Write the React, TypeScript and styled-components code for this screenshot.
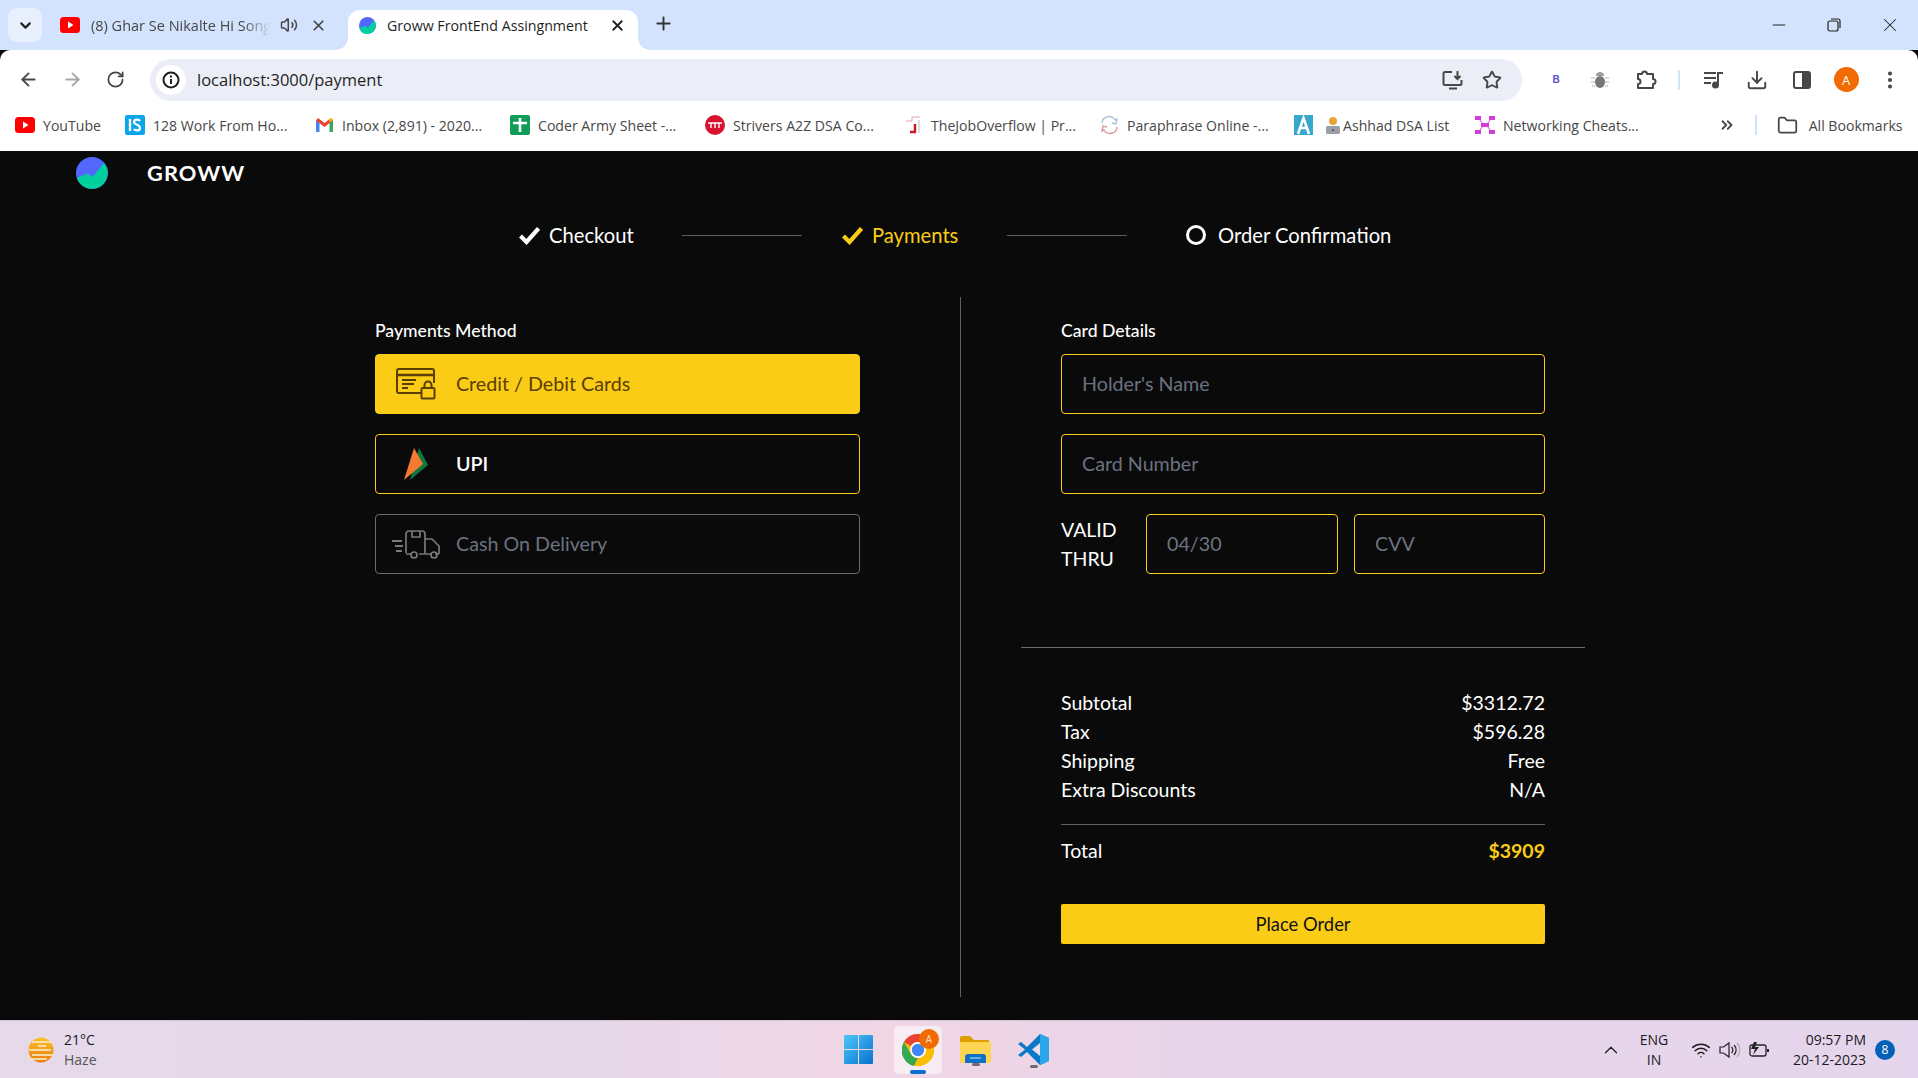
import React from "react";
import styled, { createGlobalStyle } from "styled-components";
import {
  ChevronDown, X, Plus, ArrowLeft, ArrowRight, RotateCw, Star, Download,
  EllipsisVertical, ChevronsRight, Folder, Wifi, ChevronUp, Minus, Volume2,
} from "lucide-react";

const Global = createGlobalStyle`
  html, body { margin: 0; padding: 0; background: #0a0a0a; }
  * { box-sizing: border-box; }
  #root { width: 1918px; height: 1078px; overflow: hidden; }
`;

const Shell = styled.div`
  width: 1918px; height: 1078px; display: flex; flex-direction: column;
  font-family: "Open Sans", "Noto Sans", sans-serif; overflow: hidden;
`;

/* ---------- browser chrome ---------- */
const TabStrip = styled.div`
  height: 50px; background: #d3e3fd; display: flex; align-items: flex-end; flex: none;
  padding-left: 8px; position: relative;
`;
const TabSearch = styled.div`
  width: 34px; height: 34px; margin-bottom: 8px; border-radius: 9px; background: #e9f0fd;
  display: flex; align-items: center; justify-content: center; color: #1f1f1f;
`;
const InactiveTab = styled.div`
  width: 306px; height: 42px; display: flex; align-items: center; padding: 0 0 8px 18px;
  font-size: 14.5px; color: #474747;
`;
const ActiveTab = styled.div`
  width: 290px; height: 40px; background: #fff; border-radius: 12px 12px 0 0;
  display: flex; align-items: center; padding: 0 0 10px 11px; font-size: 14.2px; color: #1f1f1f;
  position: relative;
  &::before, &::after { content: ""; position: absolute; bottom: 0; width: 12px; height: 12px; background: radial-gradient(circle at var(--c) 0, #d3e3fd 11.5px, #fff 12px); }
  &::before { left: -12px; --c: 0; }
  &::after { right: -12px; --c: 100%; }
`;
const TabTitle = styled.span<{ $w: number; $fade?: boolean }>`
  width: ${(p) => p.$w}px; margin-left: 11px; flex: none; white-space: nowrap; overflow: hidden;
  ${(p) => p.$fade && "-webkit-mask-image: linear-gradient(90deg,#000 85%,transparent 100%);"}
`;
const SpeakerSlot = styled.div`margin-left: 10px; display: flex;`;
const CloseSlot = styled.div`margin-left: 12px; display: flex;`;
const NewTab = styled.div`
  margin: 0 0 12px 15px; color: #333; display: flex; height: 30px; align-items: center;
`;
const WindowControls = styled.div`
  margin-left: auto; display: flex; align-items: center; gap: 36px; height: 50px; padding: 0 17px 0 0; color: #222;
  align-self: flex-start;
`;
const Restore = styled.svg`width: 14px; height: 14px; margin: 0 2px;`;

const Toolbar = styled.div`
  height: 55px; background: #fff; border-radius: 10px 10px 0 0; display: flex; align-items: center; flex: none;
  padding: 4px 0 0 18px; color: #474747;
`;
const NavIcons = styled.div`display: flex; gap: 23px; align-items: center; width: 132px; flex: none;`;
const Omnibox = styled.div`
  width: 1372px; height: 42px; border-radius: 21px; background: #ebeef7; display: flex; align-items: center; flex: none;
  padding: 0 20px 0 6px; font-size: 16.5px; color: #1f1f1f;
`;
const InfoBubble = styled.div`
  width: 30px; height: 30px; border-radius: 50%; background: #fff; display: flex; align-items: center; justify-content: center;
  margin-right: 11px;
`;
const InfoGlyph = styled.svg`width: 18px; height: 18px;`;
const OmniRight = styled.div`margin-left: auto; display: flex; align-items: center; gap: 18px; color: #474747;`;
const Ext = styled.div<{ $w: number }>`
  width: ${(p) => p.$w}px; display: flex; justify-content: center; align-items: center; flex: none;
`;
const BadgeB = styled.span`font-size: 10px; font-weight: 700; color: #5552cf; font-family: "Liberation Sans", sans-serif;`;
const ToolSep = styled.div`width: 2px; height: 20px; background: #d3e3fd; margin-left: -4px; flex: none;`;
const Avatar = styled.div`
  width: 25px; height: 25px; border-radius: 50%; background: #f16a02; color: #fff; font-size: 13px; flex: none;
  display: flex; align-items: center; justify-content: center;
`;

const Bookmarks = styled.div`
  height: 46px; background: #fff; display: flex; align-items: center; flex: none; padding: 0 0 6px 15px;
  font-size: 14.1px; color: #474747;
`;
const Bookmark = styled.div<{ $w: number }>`
  width: ${(p) => p.$w}px; display: flex; align-items: center; gap: 8px; white-space: nowrap; flex: none;
`;
const EmojiSlot = styled.span`display: flex; margin: 0 -6px 0 4px;`;
const BookmarkEnd = styled.div`margin-left: 7px; display: flex; align-items: center; color: #474747;`;
const BookSep = styled.div`width: 2px; height: 20px; background: #d3e3fd; margin: 0 20px 0 19px;`;

/* ---------- page ---------- */
const Page = styled.div`
  flex: 1; background: #0a0a0a; color: #fff; font-family: Lato, "Noto Sans", sans-serif; display: flex; flex-direction: column;
`;
const Brand = styled.div`
  display: flex; align-items: center; height: 38px; padding: 5px 0 0 76px; flex: none;
`;
const BrandName = styled.div`
  margin-left: 39px; font-size: 21.8px; font-weight: 700; letter-spacing: 1.1px;
`;
const Stepper = styled.div`
  display: flex; align-items: center; height: 84px; padding: 8px 0 0 519px; flex: none;
`;
const Step = styled.div<{ $w: number; $ml?: number; $active?: boolean }>`
  width: ${(p) => p.$w}px; margin-left: ${(p) => p.$ml ?? 0}px; display: flex; align-items: center; flex: none;
  font-size: 20.2px; color: ${(p) => (p.$active ? "#facc15" : "#fff")};
`;
const StepText = styled.span<{ $ml: number }>`margin-left: ${(p) => p.$ml}px;`;
const Connector = styled.div`width: 120px; height: 1px; background: #5f5f5f; flex: none; margin-top: 0;`;
const Ring = styled.div`width: 20px; height: 20px; border-radius: 50%; border: 3px solid #fff;`;

const Main = styled.div`
  display: flex; padding-left: 375px; height: 700px; margin-top: 24px; flex: none;
`;
const LeftCol = styled.div`width: 485px; flex: none; display: flex; flex-direction: column;`;
const SectionTitle = styled.div`
  font-size: 17.6px; font-weight: 500; line-height: 24px; margin: 22px 0 11px;
`;
const MethodList = styled.div`display: flex; flex-direction: column; gap: 20px;`;
const Method = styled.div<{ $kind: "active" | "open" | "off" }>`
  height: 60px; border-radius: 4px; display: flex; align-items: center; font-size: 19.7px;
  border: 1px solid ${(p) => (p.$kind === "off" ? "#6b6b6b" : "#facc15")};
  background: ${(p) => (p.$kind === "active" ? "#facc15" : "transparent")};
  color: ${(p) => (p.$kind === "active" ? "#5b3d05" : p.$kind === "off" ? "#6b7280" : "#fff")};
  font-weight: ${(p) => (p.$kind === "open" ? 600 : 400)};
  padding-bottom: 1px;
`;
const MethodIcon = styled.div`width: 80px; display: flex; justify-content: center; flex: none;`;
const Divider = styled.div`width: 1px; background: #5f5f5f; margin-left: 100px; flex: none;`;
const RightCol = styled.div`
  width: 564px; margin-left: 60px; flex: none; display: flex; flex-direction: column;
`;
const Pad = styled.div`padding: 0 40px; display: flex; flex-direction: column;`;
const FieldStack = styled.div`display: flex; flex-direction: column; gap: 20px;`;
const Field = styled.input`
  width: 100%; height: 60px; border: 1px solid #facc15; border-radius: 4px; background: transparent; color: #fff;
  font: 400 19.7px Lato, sans-serif; padding: 0 20px 1px; outline: none; min-width: 0;
  &::placeholder { color: #6b7280; opacity: 1; }
`;
const ValidRow = styled.div`display: grid; grid-template-columns: 69px 192px 191px; column-gap: 16px;`;
const ValidLabel = styled.div`font-size: 19.5px; line-height: 29px; padding-top: 1px;`;
const Rule = styled.div`height: 1px; background: #6b6b6b; margin-top: 73px;`;
const Rows = styled.div`display: flex; flex-direction: column; margin-top: 40px;`;
const Row = styled.div`
  display: flex; justify-content: space-between; font-size: 19.5px; line-height: 29px;
`;
const InnerRule = styled.div`height: 1px; background: #5f5f5f; margin: 20px 0 11px;`;
const TotalValue = styled.span`color: #facc15; font-weight: 700;`;
const Cta = styled.button`
  height: 40px; margin-top: 39px; width: 100%; border: 0; border-radius: 2px; background: #facc15; color: #111;
  font: 400 18.4px Lato, sans-serif;
`;

/* ---------- taskbar ---------- */
const Taskbar = styled.div`
  height: 58px; flex: none; border-top: 1px solid #cfc4d6; display: flex; align-items: center; position: relative;
  background: linear-gradient(90deg, #e6d9ea 0%, #e6d8e9 30%, #f1d6e5 46%, #e8d4e9 62%, #e5d5ec 100%);
  font-family: "Open Sans", sans-serif; color: #1c1c1c; padding-left: 26px;
`;
const Weather = styled.div`width: 818px; display: flex; align-items: center; gap: 10px; flex: none;`;
const WeatherText = styled.div`font-size: 14px; line-height: 20px; color: #1c1c1c;`;
const Muted = styled.div`color: #555;`;
const Tray = styled.div`display: flex; align-items: center;`;
const TrayTile = styled.div`
  width: 48px; height: 48px; margin: 0 10px 0 21px; border-radius: 5px; background: rgba(255,255,255,.55); display: flex; align-items: center; justify-content: center;
  position: relative;
`;
const Pip = styled.div<{ $blue?: boolean }>`
  position: absolute; left: 50%; bottom: ${(p) => (p.$blue ? "0" : "-3px")}; transform: translateX(-50%);
  width: ${(p) => (p.$blue ? 16 : 8)}px; height: 3.5px; border-radius: 2px; background: ${(p) => (p.$blue ? "#0a6fd1" : "#6b6b70")};
`;
const AppSlot = styled.div<{ $ml: number }>`margin-left: ${(p) => p.$ml}px; position: relative; display: flex;`;
const TileBadge = styled.div`
  position: absolute; top: 3px; right: 3px; width: 20px; height: 20px; border-radius: 50%; background: #f16a02;
  color: #fde2c8; font-size: 10px; display: flex; align-items: center; justify-content: center;
`;
const SysTray = styled.div`margin-left: auto; display: flex; align-items: center; padding-right: 23px;`;
const Lang = styled.div`font-size: 14px; line-height: 20px; text-align: center; margin: 0 0 0 11px; width: 42px;`;
const Clock = styled.div`font-size: 14px; line-height: 20px; text-align: right; margin-left: 6px; width: 90px;`;
const Notif = styled.div`
  width: 20px; height: 20px; border-radius: 50%; background: #0560b8; color: #fff; font-size: 12px; margin-left: 9px;
  display: flex; align-items: center; justify-content: center;
`;
const TrayIcons = styled.div`display: flex; align-items: center; gap: 8px; margin-left: 16px;`;

/* ---------- drawings ---------- */
const GrowwLogo = ({ s = 32 }: { s?: number }) => (
  <svg width={s} height={s} viewBox="0 0 32 32">
    <circle cx="16" cy="16" r="16" fill="#5367ff" />
    <path d="M0.8 21 L11.5 16.4 L16.5 20 L28 6 A16 16 0 0 1 16 32 A16 16 0 0 1 0.8 21Z" fill="#00d09c" />
  </svg>
);
const YouTubeIcon = ({ w = 20, h = 16 }: { w?: number; h?: number }) => (
  <svg width={w} height={h} viewBox="0 0 20 16">
    <rect width="20" height="16" rx="3.5" fill="#f00" />
    <path d="M8 4.6 L13.5 8 L8 11.4Z" fill="#fff" />
  </svg>
);
const GmailIcon = () => (
  <svg width="19" height="16" viewBox="0 0 19 16">
    <path d="M1 15V3l3.5 2.5V15H2a1 1 0 0 1-1-1z" fill="#4285f4" />
    <path d="M18 15V3l-3.5 2.5V15H17a1 1 0 0 0 1-1z" fill="#34a853" />
    <path d="M1 3.5 9.5 10 18 3.5 16 1 9.5 6 3 1z" fill="#ea4335" />
    <path d="M14.5 5.5 18 3V2.5L16 1l-1.5 1z" fill="#fbbc04" />
  </svg>
);
const StepCheck = ({ color }: { color: string }) => (
  <svg width="21" height="19" viewBox="0 0 21 19">
    <path d="M1.5 10 L7.5 16 L19.5 2.500" fill="none" stroke={color} strokeWidth="4.200" />
  </svg>
);
const CardIcon = () => (
  <svg width="42" height="34" viewBox="0 0 42 34" fill="none" stroke="#5b3d05" strokeWidth="2">
    <path d="M26 26H4a2 2 0 0 1-2-2V4a2 2 0 0 1 2-2h33a2 2 0 0 1 2 2v12" />
    <path d="M2 8h37" strokeWidth="2.6" />
    <path d="M7 13h14M7 17h12M7 21h6" />
    <rect x="26.5" y="21" width="13" height="10.5" rx="1" />
    <path d="M29.5 21v-3a3.5 3.5 0 0 1 7 0v3" />
  </svg>
);
const UpiIcon = () => (
  <svg width="24" height="34" viewBox="0 0 24 34">
    <path d="M15 1 L24 18 L6 33Z" fill="#11783d" />
    <path d="M10 1 L19 17 L0 33Z" fill="#f37a2e" />
  </svg>
);
const TruckIcon = () => (
  <svg width="50" height="30" viewBox="0 0 50 30" fill="none" stroke="#7a7a7a" strokeWidth="1.7">
    <path d="M15 24V5a3 3 0 0 1 3-3h13a3 3 0 0 1 3 3v19" />
    <path d="M21 2v6h8V2" />
    <path d="M34 10h7l7 7v7a1 1 0 0 1-1 1h-3M34 25h6M15 25h5M28 25h6" />
    <path d="M1 12h10M4 17h8M5 22h6" strokeWidth="2" />
    <circle cx="23" cy="26" r="3" /><circle cx="43" cy="26" r="3" />
  </svg>
);
const BugIcon = () => (
  <svg width="18" height="18" viewBox="0 0 18 18">
    <path d="M5 5a4 4 0 0 1 8 0z" fill="#a0a0a0" />
    <ellipse cx="9" cy="11" rx="5" ry="6" fill="#777" />
    <path d="M0 7h4M0 11h4M1 15h3M14 7h4M14 11h4M14 15h3" stroke="#b5b5b5" />
  </svg>
);
const PuzzleGlyph = () => (
  <svg width="21" height="21" viewBox="0 0 21 21" fill="none" stroke="#474747" strokeWidth="2">
    <path d="M2 5h4a2.5 2.5 0 0 1 5 0h6v5a2.5 2.5 0 0 1 0 5v4H2v-4a2.5 2.5 0 0 0 0-5z" strokeLinejoin="round" />
  </svg>
);
const MediaGlyph = () => (
  <svg width="21" height="20" viewBox="0 0 21 20" fill="none" stroke="#474747" strokeWidth="2">
    <path d="M1 3h12M1 8h12M1 13h7M15 14V3h5" />
    <circle cx="12.5" cy="15" r="2.5" fill="#474747" />
  </svg>
);
const PanelGlyph = () => (
  <svg width="18" height="18" viewBox="0 0 18 18">
    <rect x="1" y="1" width="16" height="16" rx="2" fill="#fff" stroke="#474747" strokeWidth="2" />
    <rect x="9" y="1" width="8" height="16" fill="#474747" />
  </svg>
);
const InstallGlyph = () => (
  <svg width="22" height="20" viewBox="0 0 22 20" fill="none" stroke="#474747" strokeWidth="2">
    <path d="M10 2H3a1.5 1.5 0 0 0-1.500 1.500v10A1.500 1.500 0 0 0 3 15h15a1.500 1.500 0 0 0 1.500-1.500V10M7 18.500h8M15.500 1v7M12.500 6l3 3 3-3" />
  </svg>
);
const Sheets = () => (
  <svg width="20" height="20" viewBox="0 0 20 20"><rect width="20" height="20" rx="2" fill="#0f9d58" /><path d="M10 3v14M3 8h14" stroke="#fff" strokeWidth="2.6" /></svg>
);
const IsLogo = () => (
  <svg width="20" height="20" viewBox="0 0 20 20"><rect width="20" height="20" rx="2" fill="#0ba5ec" /><path d="M5 4v12" stroke="#fff" strokeWidth="2.4" /><path d="M15 6c-1-2-6-2-6 1 0 3 6 2 6 6 0 3-5 3-6 1" fill="none" stroke="#fff" strokeWidth="2.2" /></svg>
);
const TufLogo = () => (
  <svg width="20" height="20" viewBox="0 0 20 20"><circle cx="10" cy="10" r="10" fill="#d9132f" /><path d="M3 8h14M6 8v5M10 8v5M14 8v5" stroke="#fff" strokeWidth="1.4" /></svg>
);
const JobLogo = () => (
  <svg width="18" height="20" viewBox="0 0 18 20" fill="none"><path d="M1 6h6V2h8" stroke="#e6a6a6" strokeWidth="1" /><path d="M10 9v8H5" stroke="#c9182b" strokeWidth="2.4" /><path d="M14 5v13" stroke="#bbb" strokeWidth="1" /></svg>
);
const ParaLogo = () => (
  <svg width="19" height="20" viewBox="0 0 19 20" fill="none"><path d="M2 8a7 7 0 0 1 13-3l2-1-1 5-4-1" stroke="#a9c4d8" strokeWidth="1.4" /><path d="M17 12a7 7 0 0 1-13 3l-2 1 1-5 4 1" stroke="#d69a9a" strokeWidth="1.4" /></svg>
);
const ALogo = () => (
  <svg width="19" height="20" viewBox="0 0 19 20"><rect width="19" height="20" fill="#36a7cd" /><path d="M4 19 9.500 3 15 19M6 13h7" fill="none" stroke="#fff" strokeWidth="2.6" /></svg>
);
const DevEmoji = () => (
  <svg width="16" height="18" viewBox="0 0 16 18"><circle cx="8" cy="5" r="4" fill="#e8a33a" /><rect x="1" y="10" width="14" height="8" rx="1.500" fill="#9aa0a6" /><circle cx="8" cy="14" r="1" fill="#444" /></svg>
);
const NetLogo = () => (
  <svg width="20" height="18" viewBox="0 0 20 18"><g fill="#cf3fd9"><rect x="0" y="0" width="6" height="4" /><rect x="14" y="0" width="6" height="4" /><rect x="0" y="14" width="6" height="4" /><rect x="14" y="14" width="6" height="4" /><rect x="6" y="7" width="8" height="4" /></g><path d="M4 3l4 5M16 3l-4 5M4 15l4-5M16 15l-4-5" stroke="#cf3fd9" /></svg>
);
const WeatherIcon = () => (
  <svg width="28" height="28" viewBox="0 0 28 28">
    <defs><linearGradient id="sun" x1="0" y1="0" x2="0" y2="1"><stop offset="0" stopColor="#fbc02d" /><stop offset="1" stopColor="#ee7a0c" /></linearGradient></defs>
    <circle cx="15" cy="14" r="12.500" fill="url(#sun)" />
    <path d="M6 6h22M12 10h8M3 14h22M6 19h22M1 23h20" stroke="#f3e4b8" strokeWidth="2" opacity=".9" />
  </svg>
);
const WinLogo = () => (
  <svg width="29" height="29" viewBox="0 0 29 29">
    <defs><linearGradient id="win" x1="0" y1="0" x2="1" y2="1"><stop offset="0" stopColor="#4fc6f7" /><stop offset="1" stopColor="#0672d1" /></linearGradient></defs>
    <path d="M1 0h13v14H0V1a1 1 0 0 1 1-1zM15 0h13a1 1 0 0 1 1 1v13H15zM0 15h14v14H1a1 1 0 0 1-1-1zM15 15h14v13a1 1 0 0 1-1 1H15z" fill="url(#win)" />
  </svg>
);
const ChromeLogo = () => (
  <svg width="32" height="32" viewBox="0 0 32 32">
    <circle cx="16" cy="16" r="16" fill="#fbbc04" />
    <path d="M16 0A16 16 0 0 1 30 8H16a8 8 0 0 0-7 4L2 8A16 16 0 0 1 16 0z" fill="#ea4335" />
    <path d="M2 8l7 12a8 8 0 0 0 7 4l-4 8A16 16 0 0 1 2 8z" fill="#34a853" />
    <path d="M12 32l4-8 7-4 L30 8 A16 16 0 0 1 32 16 A16 16 0 0 1 16 32z" fill="#fbbc04" />
    <circle cx="16" cy="16" r="8" fill="#fff" /><circle cx="16" cy="16" r="6.200" fill="#4285f4" />
  </svg>
);
const ExplorerLogo = () => (
  <svg width="31" height="27" viewBox="0 0 31 27">
    <path d="M0 2a2 2 0 0 1 2-2h8l4 4h15v6H0z" fill="#dda000" />
    <path d="M0 6h30a1 1 0 0 1 1 1v20H0z" fill="#fcd552" />
    <path d="M5 21a3 3 0 0 1 3-3h15a3 3 0 0 1 3 3v6H5z" fill="#0e6fc4" />
    <path d="M10 22h11" stroke="#7cc4f5" strokeWidth="1.500" />
  </svg>
);
const VsCodeLogo = () => (
  <svg width="31" height="31" viewBox="0 0 31 31">
    <path d="M22 0 31 4v23l-9 4L9 18 3 23 0 21l7-5.500L0 10l3-2 6 5z" fill="#0a78c8" />
    <path d="M22 0 31 4v23l-9 4z" fill="#2ca6ea" />
    <path d="M22 9v13l-8-6.500z" fill="#eadcec" />
  </svg>
);
const SpeakerTray = () => (
  <svg width="22" height="18" viewBox="0 0 22 18" fill="none" stroke="#222" strokeWidth="1.200">
    <path d="M1 6h3.500L10 2v14l-5.500-4H1z" /><path d="M12.500 6a4 4 0 0 1 0 6M15 4a7 7 0 0 1 0 10" /><path d="M18 2a10 10 0 0 1 0 14" stroke="#aaa" />
  </svg>
);
const BatteryTray = () => (
  <svg width="21" height="16" viewBox="0 0 21 16" fill="none" stroke="#222" strokeWidth="1.300">
    <rect x="1" y="3" width="16" height="11" rx="2" /><path d="M19 7v3" strokeWidth="2" />
    <path d="M5 0 2 7h4l-2 6 6-8H6l2-5z" fill="#222" stroke="none" />
  </svg>
);

const bookmarks: [number, React.ReactNode, string][] = [
  [110, <YouTubeIcon />, "YouTube"],
  [190, <IsLogo />, "128 Work From Ho..."],
  [195, <GmailIcon />, "Inbox (2,891) - 2020..."],
  [195, <Sheets />, "Coder Army Sheet -..."],
  [200, <TufLogo />, "Strivers A2Z DSA Co..."],
  [195, <JobLogo />, "TheJobOverflow | Pr..."],
  [194, <ParaLogo />, "Paraphrase Online -..."],
];

export default function App() {
  return (
    <Shell>
      <Global />
      <TabStrip>
        <TabSearch><ChevronDown size={17} strokeWidth={3} /></TabSearch>
        <InactiveTab>
          <YouTubeIcon />
          <TabTitle $w={179} $fade>(8) Ghar Se Nikalte Hi Song</TabTitle>
          <SpeakerSlot><Volume2 size={18} color="#474747" /></SpeakerSlot>
          <CloseSlot><X size={17} color="#474747" strokeWidth={2.4} /></CloseSlot>
        </InactiveTab>
        <ActiveTab>
          <GrowwLogo s={17} />
          <TabTitle $w={222}>Groww FrontEnd Assingnment</TabTitle>
          <X size={17} strokeWidth={2.6} />
        </ActiveTab>
        <NewTab><Plus size={21} strokeWidth={2.2} /></NewTab>
        <WindowControls>
          <Minus size={20} strokeWidth={1.2} />
          <Restore viewBox="0 0 14 14" fill="none" stroke="#222" strokeWidth="1.200">
            <rect x="1" y="3" width="10" height="10" rx="2" /><path d="M4 1h7a2 2 0 0 1 2 2v7" />
          </Restore>
          <X size={22} strokeWidth={1.1} />
        </WindowControls>
      </TabStrip>

      <Toolbar>
        <NavIcons>
          <ArrowLeft size={21} strokeWidth={2.1} />
          <ArrowRight size={21} strokeWidth={2.1} color="#a8a8a8" />
          <RotateCw size={19} strokeWidth={2.2} />
        </NavIcons>
        <Omnibox>
          <InfoBubble>
            <InfoGlyph viewBox="0 0 18 18" fill="none" stroke="#1f1f1f" strokeWidth="2">
              <circle cx="9" cy="9" r="7.500" /><path d="M9 8v5M9 4.500v2" />
            </InfoGlyph>
          </InfoBubble>
          localhost:3000/payment
          <OmniRight>
            <InstallGlyph />
            <Star size={20} strokeWidth={2.3} />
          </OmniRight>
        </Omnibox>
        <Ext $w={68}><BadgeB>B</BadgeB></Ext>
        <Ext $w={20}><BugIcon /></Ext>
        <Ext $w={72}><PuzzleGlyph /></Ext>
        <ToolSep />
        <Ext $w={66}><MediaGlyph /></Ext>
        <Ext $w={22}><Download size={22} strokeWidth={2.1} /></Ext>
        <Ext $w={68}><PanelGlyph /></Ext>
        <Ext $w={20}><Avatar>A</Avatar></Ext>
        <Ext $w={68}><EllipsisVertical size={22} strokeWidth={2.4} /></Ext>
      </Toolbar>

      <Bookmarks>
        {bookmarks.map(([w, icon, label]) => (
          <Bookmark key={label} $w={w}>{icon}{label}</Bookmark>
        ))}
        <Bookmark $w={181}><ALogo /><EmojiSlot><DevEmoji /></EmojiSlot>Ashhad DSA List</Bookmark>
        <Bookmark $w={243}><NetLogo />Networking Cheats...</Bookmark>
        <ChevronsRight size={18} strokeWidth={2.4} />
        <BookSep />
        <Folder size={21} strokeWidth={2} />
        <BookmarkEnd>&nbsp;All Bookmarks</BookmarkEnd>
      </Bookmarks>

      <Page>
        <Brand>
          <GrowwLogo s={32} />
          <BrandName>GROWW</BrandName>
        </Brand>
        <Stepper>
          <Step $w={163}><StepCheck color="#fff" /><StepText $ml={9}>Checkout</StepText></Step>
          <Connector />
          <Step $w={165} $ml={40} $active><StepCheck color="#facc15" /><StepText $ml={9}>Payments</StepText></Step>
          <Connector />
          <Step $w={260} $ml={59}><Ring /><StepText $ml={12}>Order Confirmation</StepText></Step>
        </Stepper>
        <Main>
          <LeftCol>
            <SectionTitle>Payments Method</SectionTitle>
            <MethodList>
              <Method $kind="active"><MethodIcon><CardIcon /></MethodIcon>Credit / Debit Cards</Method>
              <Method $kind="open"><MethodIcon><UpiIcon /></MethodIcon>UPI</Method>
              <Method $kind="off"><MethodIcon><TruckIcon /></MethodIcon>Cash On Delivery</Method>
            </MethodList>
          </LeftCol>
          <Divider />
          <RightCol>
            <Pad>
              <SectionTitle>Card Details</SectionTitle>
              <FieldStack>
                <Field placeholder="Holder's Name" readOnly />
                <Field placeholder="Card Number" readOnly />
                <ValidRow>
                  <ValidLabel>VALID THRU</ValidLabel>
                  <Field placeholder="04/30" readOnly />
                  <Field placeholder="CVV" readOnly />
                </ValidRow>
              </FieldStack>
            </Pad>
            <Rule />
            <Pad>
              <Rows>
                <Row><span>Subtotal</span><span>$3312.72</span></Row>
                <Row><span>Tax</span><span>$596.28</span></Row>
                <Row><span>Shipping</span><span>Free</span></Row>
                <Row><span>Extra Discounts</span><span>N/A</span></Row>
                <InnerRule />
                <Row><span>Total</span><TotalValue>$3909</TotalValue></Row>
              </Rows>
              <Cta>Place Order</Cta>
            </Pad>
          </RightCol>
        </Main>
      </Page>

      <Taskbar>
        <Weather>
          <WeatherIcon />
          <WeatherText>21°C<Muted>Haze</Muted></WeatherText>
        </Weather>
        <Tray>
          <WinLogo />
          <TrayTile><ChromeLogo /><TileBadge>A</TileBadge><Pip $blue /></TrayTile>
          <AppSlot $ml={8}><ExplorerLogo /><Pip /></AppSlot>
          <AppSlot $ml={27}><VsCodeLogo /><Pip /></AppSlot>
        </Tray>
        <SysTray>
          <ChevronUp size={22} strokeWidth={1.3} />
          <Lang>ENG<br />IN</Lang>
          <TrayIcons>
            <Wifi size={20} strokeWidth={1.8} />
            <SpeakerTray />
            <BatteryTray />
          </TrayIcons>
          <Clock>09:57 PM<br />20-12-2023</Clock>
          <Notif>8</Notif>
        </SysTray>
      </Taskbar>
    </Shell>
  );
}
